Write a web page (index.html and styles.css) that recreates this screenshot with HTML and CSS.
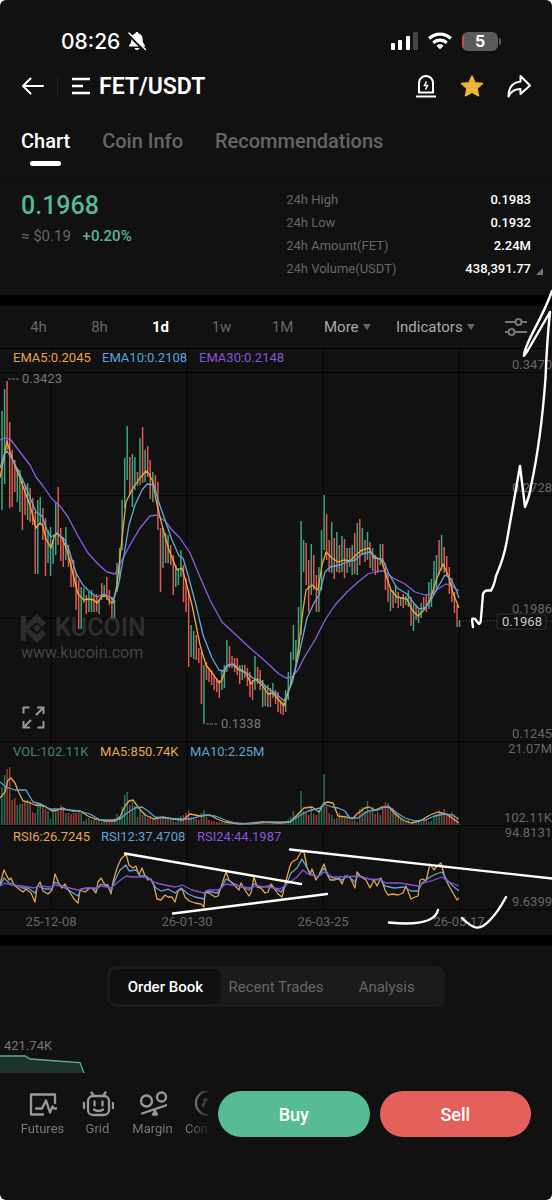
FILE: index.html
```html
<!DOCTYPE html>
<html lang="en">
<head>
    <meta charset="UTF-8">
    <meta name="viewport" content="width=device-width, initial-scale=1.0">
    <title>FET/USDT</title>
    <link rel="stylesheet" href="styles.css">
</head>
<body>
    <div class="screen">
        <div class="status">
            <div class="clock">
                <span>08:26</span>
                <svg width="20" height="20" viewBox="0 0 20 20">
                    <path d="M10 1c1 0 1.600.7 1.600 1.500 2.700.7 4 2.800 4 5.500 0 3.500 1 5 2.400 6.500v1H2v-1c1.400-1.500 2.400-3 2.400-6.500 0-2.700 1.300-4.800 4-5.500C8.400 1.700 9 1 10 1zM7.500 17h5c-.3 1.300-1.300 2-2.500 2s-2.200-.7-2.500-2z" fill="#fff"/>
                    <path d="M1 3.500 17 19.500" stroke="#111" stroke-width="2"/>
                    <path d="M2 2 18.500 18.500" stroke="#fff" stroke-width="1.500" stroke-linecap="round"/>
                </svg>
            </div>
            <div class="signals">
                <svg width="27" height="18" viewBox="0 0 27 18">
                    <rect x="0" y="11" width="4" height="7" rx="1" fill="#fff"/>
                    <rect x="7" y="8" width="4" height="10" rx="1" fill="#fff"/>
                    <rect x="15" y="4" width="4" height="14" rx="1" fill="#fff"/>
                    <rect x="22" y="0" width="5" height="18" rx="1" fill="#444"/>
                </svg>
                <svg width="24" height="18" viewBox="0 0 24 18" fill="none" stroke="#fff" stroke-width="3.200">
                    <path d="M1.200 6.500a15.500 15.500 0 0 1 21.600 0"/>
                    <path d="M5.300 10.800a9.600 9.600 0 0 1 13.400 0"/>
                    <path d="M8.500 13.800a5 5 0 0 1 7 0L12 17.600z" fill="#fff" stroke="none"/>
                </svg>
                <div class="battery">5</div>
            </div>
        </div>

        <header class="header">
            <button class="icon-btn" aria-label="Back">
                <svg width="22" height="18" viewBox="0 0 22 18" fill="none" stroke="#fff" stroke-width="2" stroke-linecap="round" stroke-linejoin="round"><path d="M21 9H1M8.500 1.500 1 9l7.500 7.500"/></svg>
            </button>
            <span class="divider"></span>
            <button class="pair">
                <svg width="18" height="18" viewBox="0 0 18 18" fill="none" stroke="#fff" stroke-width="2.400"><path d="M0 2h18M0 9h11M0 16h18"/></svg>
                <span>FET/USDT</span>
            </button>
            <div class="actions">
                <button class="icon-btn" aria-label="Alert">
                    <svg width="22" height="24" viewBox="0 0 22 24" fill="none" stroke="#fff" stroke-width="2"><path d="M4 18.500V9a7 7 0 0 1 14 0v9.500zM1 22.500h20"/><path d="M11.500 7.500 9.500 11.500h3l-2 4" stroke-width="1.500"/></svg>
                </button>
                <button class="icon-btn" aria-label="Favourite">
                    <svg width="24" height="24" viewBox="0 0 24 24"><path d="m12 2 3 6.700 7.500.8-5.500 5 1.500 7.300-6.500-3.600-6.500 3.600L7 14.500l-5.500-5L9 8.700z" fill="#ecb43d" stroke="#ecb43d" stroke-width="1.500" stroke-linejoin="round"/></svg>
                </button>
                <button class="icon-btn" aria-label="Share">
                    <svg width="24" height="24" viewBox="0 0 24 24" fill="none" stroke="#fff" stroke-width="2" stroke-linejoin="round"><path d="M13.500 2 23 11.500l-9.500 8.500v-5C8 15 4 17 1.500 22.500 1.500 14 5 8.500 13.500 7.500z"/></svg>
                </button>
            </div>
        </header>

        <nav class="tabs">
            <a class="tab active" href="#">Chart</a>
            <a class="tab" href="#">Coin Info</a>
            <a class="tab" href="#">Recommendations</a>
        </nav>

        <section class="summary">
            <div>
                <p class="price">0.1968</p>
                <p class="change">≈ $0.19 <span>+0.20%</span></p>
            </div>
            <dl class="stats">
                <div><dt>24h High</dt><dd>0.1983</dd></div>
                <div><dt>24h Low</dt><dd>0.1932</dd></div>
                <div><dt>24h Amount(FET)</dt><dd>2.24M</dd></div>
                <div class="last"><dt>24h Volume(USDT)</dt><dd>438,391.77</dd></div>
            </dl>
        </section>

        <section class="market">
            <div class="toolbar">
                <button>4h</button>
                <button>8h</button>
                <button class="active">1d</button>
                <button>1w</button>
                <button>1M</button>
                <button class="drop">More</button>
                <button class="drop">Indicators</button>
                <button class="settings" aria-label="Chart settings">
                    <svg width="22" height="18" viewBox="0 0 22 18" fill="none" stroke="#777" stroke-width="2"><path d="M0 4h10M17 4h5M0 14h3M10 14h12"/><circle cx="13.500" cy="4" r="3"/><circle cx="6.500" cy="14" r="3"/></svg>
                </button>
            </div>

            <svg class="chart" viewBox="0 348 552 587">
                <path class="grid" d="M0 348.500H552M0 372.500H552M0 495.500H552M0 618.500H552M0 741.500H552M0 825.500H552M0 909.500H552M51.500 348V909M187.500 348V909M323.500 348V909M459.500 348V909"/>

                <!-- watermark -->
                <g class="watermark">
                    <path d="M21 616h5v9l11-11 9 9-4 4-5-5-8 6.500 8 6.500 5-5 4 4-9 9-11-11v9h-5z"/>
                    <path d="m37 624 4 4-4 4-4-4z"/>
                    <text class="mark" x="55" y="636">KUCOIN</text>
                    <text class="site" x="21" y="658">www.kucoin.com</text>
                </g>

                <g id="candles"></g>
                <g id="volume"></g>
                <g id="lines"></g>

                <path class="expand" d="M23.500 713.500v-6h6M37 707.500h6.500v6.500M43 708l-7 7M43.500 721v6.500h-6M23.500 721v6.500H30M24 727l7-7"/>

                <g class="legend">
                    <text class="orange" x="13" y="362">EMA5:0.2045</text>
                    <text class="blue" x="102" y="362">EMA10:0.2108</text>
                    <text class="purple" x="199" y="362">EMA30:0.2148</text>
                    <text class="green" x="13" y="756">VOL:102.11K</text>
                    <text class="orange" x="100" y="756">MA5:850.74K</text>
                    <text class="blue" x="190" y="756">MA10:2.25M</text>
                    <text class="orange" x="13" y="841">RSI6:26.7245</text>
                    <text class="blue" x="101" y="841">RSI12:37.4708</text>
                    <text class="purple" x="197" y="841">RSI24:44.1987</text>
                </g>

                <g class="axis">
                    <text x="552" y="369">0.3470</text>
                    <text x="552" y="492">0.2728</text>
                    <text x="552" y="613">0.1986</text>
                    <text x="552" y="738">0.1245</text>
                    <text x="552" y="753">21.07M</text>
                    <text x="552" y="822">102.11K</text>
                    <text x="552" y="837">94.8131</text>
                    <text x="552" y="906">9.6399</text>
                </g>
                <g class="dates">
                    <text x="51" y="926">25-12-08</text>
                    <text x="187" y="926">26-01-30</text>
                    <text x="323" y="926">26-03-25</text>
                    <text x="459" y="926">26-05-17</text>
                </g>
                <g class="peak">
                    <path d="M8 379H19M206 724H217" stroke="#777" stroke-dasharray="3 1"/>
                    <text x="22" y="383">0.3423</text>
                    <text x="221" y="728">0.1338</text>
                </g>

                <path d="M460 621H552" stroke="#555" stroke-dasharray="1 2"/>
                <rect x="497" y="614" width="49" height="15" rx="2" fill="#111" stroke="#333"/>
                <text class="current" x="522" y="626">0.1968</text>

                <!-- hand drawn trend lines -->
                <g class="pen">
                    <path d="M473 627 472 620Q472 618 475 619L479 624Q481 623 481 618L483 594Q484 591 487 590.500L491 590.500Q494 586 496 576 504 558 507 540L520 466 525 507Q530 495 531 486 541 440 545.500 378 547 340 550 312L528 350Q523 358 524 355C526 340 541 322 552 291"/>
                    <path d="M125 853.500 301 884M173 913.500 327 894M290 849.500 552 878.500"/>
                    <path d="M389 922.500Q434 927 438 910M462 918C474 930 480 931 490 920Q498 912 506 897"/>
                </g>
            </svg>
        </section>

        <section class="book">
            <div class="segmented">
                <button class="active">Order Book</button>
                <button>Recent Trades</button>
                <button>Analysis</button>
            </div>
            <p class="depth-label">421.74K</p>
            <svg class="depth" width="88" height="18" viewBox="0 0 88 18">
                <path d="M0 1H25L30 4 80 7.500 84 18H0z" fill="#1b332c"/>
                <path d="M0 1H25L30 4 80 7.500 84 18" fill="none" stroke="#5fae91" stroke-width="1.300"/>
            </svg>
        </section>

        <footer class="bottom">
            <div class="quick">
                <a href="#">
                    <svg width="28" height="26" viewBox="0 0 28 26"><path d="M14 23.500H2v-20h24V12M7 17.500h6l4-8 4 12 2.500-6 1.500 2h2.500"/></svg>
                    <span>Futures</span>
                </a>
                <a href="#">
                    <svg width="32" height="26" viewBox="0 0 32 26"><rect x="6" y="5" width="21" height="19" rx="5"/><path d="m12 5-2.500-3.500M21 5l2.500-3.500M2 12v5M31 12v5M12.500 10.500v4M20.500 10.500v4M12 18.500c2.500 2 6.500 2 9 0"/></svg>
                    <span>Grid</span>
                </a>
                <a href="#">
                    <svg width="28" height="26" viewBox="0 0 28 26"><circle cx="7.500" cy="10" r="5.500"/><circle cx="22.500" cy="6" r="4.500"/><path d="M3 22.500 28 14M16 20l-2 3.500h4z"/></svg>
                    <span>Margin</span>
                </a>
                <a href="#">
                    <svg width="28" height="26" viewBox="0 0 28 26"><circle cx="14" cy="12" r="12"/><path d="M9 15c2-6 5-8 10-7M10 9l2-1"/></svg>
                    <span>Convert</span>
                </a>
            </div>
            <button class="trade buy">Buy</button>
            <button class="trade sell">Sell</button>
        </footer>
    </div>

    <script src="script.js"></script>
</body>
</html>
```

FILE: styles.css
```css
*{
    margin: 0;
    padding: 0;
    box-sizing: border-box;
}
html{
    background-color: white;
}
body{
    font-family: Roboto, "Liberation Sans", sans-serif;
    color: white;
}
button{
    font-family: inherit;
    background: none;
    border: none;
    color: inherit;
    cursor: pointer;
}
a{
    color: inherit;
    text-decoration: none;
}
svg{
    display: block;
}
.screen{
    min-height: 100vh;
    display: flex;
    flex-direction: column;
    background-color: #111;
    border-radius: 6px;
    overflow: hidden;
}

/* status bar */
.status{
    display: flex;
    justify-content: space-between;
    align-items: center;
    height: 62px;
    padding: 20px 54px 0 61px;
}
.clock{
    display: flex;
    align-items: center;
    gap: 7px;
    font-family: Inter, sans-serif;
    font-size: 21px;
    font-weight: 500;
}
.signals{
    display: flex;
    align-items: center;
    gap: 10px;
}
.battery{
    position: relative;
    width: 36px;
    height: 19px;
    border-radius: 6px;
    background: linear-gradient(to right, #c0504e 2px, #5a5a5a 2px);
    font-family: Inter, sans-serif;
    font-size: 16px;
    font-weight: 700;
    line-height: 19px;
    text-align: center;
}
.battery::after{
    content: "";
    position: absolute;
    right: -3px;
    top: 6px;
    width: 2px;
    height: 7px;
    border-radius: 0 2px 2px 0;
    background-color: #5a5a5a;
}

/* header */
.header{
    display: flex;
    align-items: center;
    height: 48px;
    padding: 0 21px 0 22px;
}
.divider{
    width: 1px;
    height: 20px;
    margin: 0 14px 0 13px;
    background-color: #222;
}
.pair{
    display: flex;
    align-items: center;
    gap: 9px;
    font-size: 23px;
    font-weight: 600;
}
.actions{
    display: flex;
    gap: 23px;
    margin-left: auto;
}
.tabs{
    display: flex;
    gap: 32px;
    height: 70px;
    padding: 17px 21px 0;
    font-size: 20px;
    font-weight: 500;
    line-height: 28px;
    color: #666;
}
.tab{
    position: relative;
}
.tab.active{
    color: white;
}
.tab.active::after{
    content: "";
    position: absolute;
    left: 50%;
    top: 34px;
    width: 31px;
    height: 5px;
    margin-left: -16px;
    border-radius: 3px;
    background-color: white;
}

/* price and 24h stats */
.summary{
    display: flex;
    justify-content: space-between;
    height: 115px;
    padding: 7px 21px 0;
    border-top: 1px solid #0c0c0c;
}
.price{
    font-size: 25px;
    font-weight: 500;
    line-height: 36px;
    color: #57b893;
}
.change{
    font-size: 15px;
    line-height: 24px;
    color: #666;
}
.change span{
    margin-left: 8px;
    font-weight: 500;
    color: #57b893;
}
.stats{
    width: 48%;
    font-size: 13px;
    line-height: 23px;
}
.stats div{
    display: flex;
    justify-content: space-between;
    position: relative;
}
.stats dt{
    color: #666;
}
.stats dd{
    font-weight: 500;
}
.stats .last::after{
    content: "";
    position: absolute;
    right: -12px;
    bottom: 5px;
    border-left: 7px solid transparent;
    border-bottom: 7px solid #777;
}

/* chart */
.market{
    border-top: 11px solid black;
    border-bottom: 11px solid black;
}
.toolbar{
    display: grid;
    grid-template-columns: repeat(5, 61fr) 72fr 110fr 57fr;
    height: 42px;
    padding-left: 8px;
}
.toolbar button{
    font-size: 15px;
    color: #666;
}
.toolbar .active{
    font-weight: 700;
    color: white;
}
.toolbar .drop{
    display: flex;
    align-items: center;
    gap: 4px;
    padding-left: 11px;
    color: #aaa;
}
.drop::after{
    content: "";
    border: 4px solid transparent;
    border-top: 6px solid #666;
    border-bottom: 0;
}
.settings{
    padding-left: 10px;
}
.chart{
    width: 100%;
    height: auto;
    overflow: visible;
    position: relative;
    font-size: 13px;
}
.grid{
    stroke: #040404;
    fill: none;
}
.watermark{
    fill: #2d2d2d;
}
.mark{
    font-size: 25px;
    font-weight: 600;
}
.site{
    font-size: 16px;
    fill: #444;
}
.expand{
    stroke: #999;
    stroke-width: 2;
    fill: none;
}
.orange{ fill: #e5a54b; }
.blue{ fill: #5fa3d6; }
.purple{ fill: #8a55d4; }
.green{ fill: #41886d; }
.axis, .dates, .peak{
    fill: #666;
}
.axis{
    text-anchor: end;
}
.dates, .current{
    text-anchor: middle;
}
.peak{
    fill: #777;
}
.current{
    fill: #ccc;
}
.line{
    fill: none;
    stroke-width: 1.3px;
    stroke-linejoin: round;
}
.pen{
    fill: none;
    stroke: white;
    stroke-width: 2.4px;
    stroke-linecap: round;
    stroke-linejoin: round;
}

/* order book */
.book{
    padding-top: 20px;
}
.segmented{
    display: flex;
    width: 61%;
    max-width: 480px;
    min-width: 338px;
    margin: 0 auto;
    padding: 3px;
    border-radius: 10px;
    background-color: #1b1b1b;
}
.segmented button{
    flex: 1 1 0;
    height: 35px;
    border-radius: 7px;
    font-size: 15px;
    color: #666;
}
.segmented .active{
    background-color: #0f0f0f;
    font-weight: 500;
    color: white;
}
.depth-label{
    margin-top: 30px;
    padding-left: 4px;
    font-size: 13px;
    line-height: 18px;
    color: #777;
}

/* bottom bar */
.bottom{
    display: flex;
    gap: 10px;
    padding: 18px 21px 0 0;
}
.quick{
    display: flex;
    width: 208px;
    padding-left: 15px;
    overflow: hidden;
    -webkit-mask-image: linear-gradient(to right, black 188px, transparent 212px);
    mask-image: linear-gradient(to right, black 188px, transparent 212px);
}
.quick a{
    display: flex;
    flex: 0 0 55px;
    flex-direction: column;
    align-items: center;
    gap: 3px;
    font-size: 13px;
    line-height: 18px;
    color: #777;
}
.quick svg{
    fill: none;
    stroke: #999;
    stroke-width: 2.3px;
    stroke-linecap: round;
    stroke-linejoin: round;
}
.trade{
    flex: 1;
    height: 46px;
    border-radius: 23px;
    font-size: 18px;
    font-weight: 500;
}
.buy{
    background-color: #57bb93;
}
.sell{
    background-color: #e3615a;
}
```

FILE: script.js
```js
// one entry per day: colour, top, bottom
const candles = `g411,510 g389,484 r381,450 r422,508 r450,507 r460,492 g468,502 g470,512 r478,530 r485,515
g483,520 r488,522 r498,525 r512,574 g500,574 g497,525 r508,540 r518,576 g530,563 g527,576
g540,564 g503,555 r487,545 r528,561 r537,567 g527,560 r545,567 r557,587 r560,587 r572,610
r580,629 g587,629 g588,603 r595,614 g592,612 g590,612 r595,612 r594,612 g600,614 r583,600
g585,597 r577,600 r590,605 r597,618 g600,618 g563,592 g548,580 g500,550 g458,508 g426,480
r457,495 g454,507 g457,490 r472,486 g438,485 r427,483 g450,482 r446,477 r460,499 g472,502
r475,492 r482,530 r528,592 g528,568 r533,563 g535,563 r545,565 r555,595 g565,587 g568,585
g550,577 r565,602 r578,612 r590,667 g625,657 g631,659 r635,660 r648,663 r652,704 g665,724
r662,680 r668,682 r670,685 r675,690 r678,692 r680,698 g670,690 g665,688 g640,672 r646,668
r656,668 r658,672 r658,675 r665,684 g665,680 r665,678 r668,686 r672,697 r680,700 g656,690
r667,684 r670,690 g680,707 r685,706 g685,707 r688,707 g683,698 r690,704 r692,712 r700,714
r702,715 g690,712 g672,700 g652,685 g625,660 g640,662 g607,655 g521,635 g540,572 r543,585
r560,612 g544,595 r555,590 r575,612 g567,612 g530,590 g495,550 r514,560 r540,572 g522,573
r538,579 g532,572 r545,573 g536,572 r539,578 g548,573 r548,567 g545,575 r533,574 g523,575
r519,565 g528,555 r540,562 g532,560 r542,568 g548,571 r555,575 r558,573 g544,565 r544,566
r563,590 r573,602 g590,611 r590,608 g585,603 r592,608 g597,606 r594,608 g596,605 g590,607
r597,626 g604,631 r605,620 g610,623 g603,618 r597,610 r596,612 g582,609 g579,607 g561,595
g555,590 r540,575 g535,570 r547,573 r556,576 r567,594 r578,602 r592,613 r605,627 g620,627`.split(/\s+/);

const volumes = [38, 50, 56, 58, 25, 27, 20, 21, 21, 23, 25, 24, 13, 12, 22, 21, 20, 16, 14, 6,
    15, 15, 14, 20, 18, 12, 12, 11, 12, 12, 13, 12, 4, 6, 7, 5, 5, 4, 4, 3,
    5, 4, 3, 4, 5, 11, 9, 18, 30, 33, 20, 23, 19, 8, 15, 10, 12, 7, 9, 7,
    5, 8, 9, 7, 6, 8, 5, 4, 3, 5, 9, 10, 12, 15, 8, 6, 6, 5, 12, 15,
    8, 5, 4, 4, 3, 3, 3, 2, 4, 3, 2, 2, 3, 2, 2, 1, 2, 2, 3, 3,
    3, 2, 4, 3, 2, 3, 2, 2, 3, 3, 2, 4, 6, 8, 14, 9, 12, 34, 14, 12,
    10, 17, 11, 10, 14, 18, 51, 19, 12, 10, 6, 7, 12, 8, 7, 10, 5, 4, 6, 3,
    16, 18, 14, 24, 13, 18, 11, 13, 10, 16, 23, 22, 18, 17, 13, 11, 6, 5, 4, 5,
    3, 3, 2, 4, 3, 4, 5, 3, 4, 10, 11, 14, 12, 16, 12, 11, 13, 11, 8, 1];

const lines = [
    // moving averages on the price
    ["#8c5ee6", "0,440 5,438 10,439 20,452 30,465 36,477 43,486 52,499 60,506 68,517 78,536 88,553 98,564 107,572 115,574 121,562 130,545 140,528 150,516 156,515 165,521 172,530 180,538 190,553 200,577 210,600 222,622 235,634 250,648 265,661 279,674 286,678 292,677 298,670 305,656 315,640 325,620 335,605 347,592 358,582 368,574 378,571 384,571 393,578 405,584 415,592 425,595 432,594 438,589 446,584 452,586 459,591"],
    ["#f0a83c", "0,478 3,462 7,441 10,452 15,466 20,478 25,492 30,505 33,517 36,528 40,523 43,526 46,539 51,548 54,537 57,533 62,538 67,550 72,570 78,594 84,600 88,599 94,600 97,603 102,596 106,596 110,602 113,603 117,585 121,548 126,502 133,488 140,478 146,471 149,474 153,482 156,500 162,525 169,550 177,570 182,568 186,582 192,605 200,645 206,665 213,674 219,683 222,680 226,667 232,664 239,670 246,673 251,684 255,679 262,685 268,694 273,693 278,699 284,706 289,690 295,670 299,645 303,610 306,590 312,585 318,590 322,565 326,552 332,558 338,562 344,560 350,561 356,555 362,550 369,548 374,558 381,559 386,575 391,590 397,597 407,599 412,610 418,616 424,610 430,600 437,578 443,564 448,575 453,593 459,608"],
    ["#5fa9dc", "0,468 4,455 7,451 12,459 18,470 25,485 31,500 36,512 42,516 47,530 51,537 57,533 65,540 70,553 76,573 83,585 90,592 97,597 104,594 110,597 113,600 118,587 124,555 129,525 135,505 142,490 147,484 154,485 158,500 165,520 172,540 179,556 183,558 188,575 196,605 203,635 212,658 219,670 223,671 228,665 233,664 240,669 248,674 253,678 260,680 266,687 275,693 284,701 292,683 300,650 307,618 314,603 319,595 325,572 330,567 340,565 347,562 355,560 362,554 370,552 377,558 383,560 389,574 397,588 407,594 413,602 419,609 425,608 431,600 438,587 445,575 450,578 455,587 459,598"],
    // volume averages
    ["#e5a54b", "0,798 5,792 8,780 11,778 15,783 19,793 23,801 28,802 35,805 44,806 52,811 58,810 62,808 72,811 80,811 88,816 95,819 105,821 115,821 120,817 125,806 129,801 133,800 138,807 145,815 154,819 163,817 172,819 183,820 190,814 200,816 210,815 217,819 225,822 240,824 262,822 280,823 290,822 300,812 304,808 312,807 319,812 324,803 328,802 333,803 338,816 346,817 352,819 358,813 365,808 369,807 375,810 382,807 389,807 395,814 403,820 411,823 420,821 430,815 438,812 446,814 452,818 459,823"],
    ["#5fa3d6", "0,782 6,787 15,790 26,790 33,802 41,804 50,809 58,809 70,810 80,811 90,814 100,820 112,820 120,819 127,813 135,808 142,807 148,811 155,817 165,818 180,819 190,819 204,815 215,816 225,820 235,823 250,824 268,822 290,822 299,816 308,811 320,808 324,804 332,807 338,808 345,811 350,818 358,818 368,811 378,810 388,806 397,813 405,818 415,821 425,820 435,816 444,814 452,815 459,819"],
    // rsi
    ["#e5a54b", "0,884 4,870 7,876 9,880 11,878 14,885 19,889 23,892 26,889 31,893 35,902 37,887 40,882 43,891 48,894 52,890 55,874 59,884 62,888 65,884 69,891 74,899 78,903 80,890 85,892 90,888 93,889 96,893 98,882 101,878 105,885 108,885 111,894 113,882 117,868 121,859 126,854 129,865 133,868 136,866 139,875 142,868 145,876 148,880 151,879 154,886 157,899 161,900 165,895 168,897 172,897 175,902 178,891 182,889 185,897 189,901 195,903 201,904 204,907 205,892 209,893 215,897 218,896 222,884 226,872 229,880 232,883 236,887 239,890 241,883 245,890 249,896 251,893 254,877 257,887 261,888 265,893 268,892 271,884 274,888 278,894 282,897 284,889 287,877 290,866 292,862 297,859 301,852 304,852 307,867 310,875 312,869 316,880 319,875 324,864 327,874 330,880 335,880 339,878 342,884 345,876 350,877 355,888 357,872 361,877 366,880 370,888 374,880 377,886 381,878 385,890 388,895 393,894 398,895 403,893 406,886 411,899 415,897 418,896 420,880 423,879 426,881 430,864 434,870 437,866 441,863 445,878 449,886 453,893 457,900 459,898"],
    ["#5fa3d6", "0,886 4,878 9,883 15,885 22,888 28,888 35,893 38,886 45,889 52,889 55,882 62,886 70,891 78,896 81,889 90,888 97,889 101,884 107,886 111,891 115,880 120,870 126,865 129,871 136,870 140,876 146,876 151,880 156,888 161,891 168,889 175,893 181,888 188,894 195,897 204,899 206,891 217,893 222,887 226,879 233,883 239,886 249,890 254,884 262,887 270,886 281,892 286,885 291,873 297,868 302,859 307,868 311,874 318,877 324,868 330,877 342,880 348,876 355,882 358,875 366,878 372,880 380,879 385,886 394,888 404,887 411,891 418,891 422,883 430,877 436,874 442,872 447,880 453,886 459,891"],
    ["#8a4fd0", "0,886 5,883 12,885 22,886 34,888 40,886 50,887 55,885 65,887 78,890 85,888 97,888 102,886 111,888 118,882 126,876 132,877 145,877 156,883 165,885 175,887 182,885 192,890 204,893 208,890 218,890 226,884 238,886 250,888 256,886 268,887 280,889 290,882 297,877 303,870 308,874 318,877 324,872 333,877 345,877 357,876 370,879 381,880 386,883 400,883 418,886 424,883 434,880 442,877 449,882 459,886"]
];

const colors = { g: "#3fa581", r: "#de5a54" };
const darker = { g: "#237058", r: "#963c39" };
const step = 2.556;
const svgNS = "http://www.w3.org/2000/svg";

const addPath = (parent, d, stroke, width) => {
    const path = document.createElementNS(svgNS, "path");
    path.setAttribute("d", d);
    path.setAttribute("stroke", stroke);
    path.setAttribute("stroke-width", width);
    path.setAttribute("fill", "none");
    document.querySelector(parent).appendChild(path);
    return path;
};

candles.forEach((candle, i) => {
    const side = candle[0];
    const [top, bottom] = candle.slice(1).split(",");
    const x = (2 + i * step).toFixed(1);
    addPath("#candles", `M${x} ${top}V${bottom}`, colors[side], 1.5);
    addPath("#volume", `M${x} 825V${825 - volumes[i]}`, darker[side], 1.5);
});

lines.forEach(([color, points]) => {
    addPath("#lines", "M" + points.split(" ").join("L"), color, 1).classList.add("line");
});
```
